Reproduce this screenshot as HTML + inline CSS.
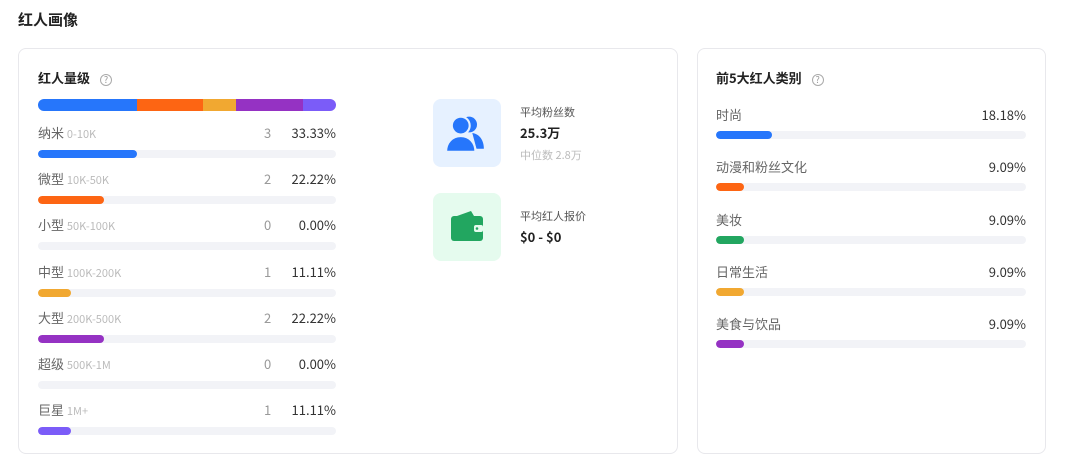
<!DOCTYPE html><html><head><meta charset="utf-8"><style>
*{margin:0;padding:0;box-sizing:border-box}
body{width:1080px;height:474px;background:#fff;font-family:"Noto Sans CJK SC","Liberation Sans",sans-serif;position:relative;overflow:hidden;color:#333}
.a{position:absolute;white-space:nowrap;line-height:18px}
.card{position:absolute;border:1px solid #e8e8ec;border-radius:8px;background:#fff}
.t{font-size:13px;font-weight:bold;color:#222}
.q{display:inline-block;width:12px;height:12px;border:1px solid #aaa;border-radius:50%;font-size:9px;line-height:10px;text-align:center;color:#999;font-weight:normal;margin-left:10px;vertical-align:0px}
.lab{font-size:13px;color:#666}
.lab span{font-size:11px;color:#bbb}
.n{font-size:13px;color:#999}
.p{font-size:13px;color:#333}
.bar{position:absolute;height:8px;border-radius:4px;background:#f2f3f7;overflow:hidden}
.bar i{position:absolute;left:0;top:0;bottom:0;border-radius:4px}
</style></head><body>
<div class="a" style="left:18px;top:10px;font-size:15px;font-weight:bold;color:#222;line-height:20px">红人画像</div>
<div class="card" style="left:18px;top:48px;width:660px;height:406px"></div>
<div class="card" style="left:697px;top:48px;width:349px;height:406px"></div>
<div class="a t" style="left:38px;top:69px">红人量级<span class="q">?</span></div>
<div style="position:absolute;left:38px;top:99px;width:298px;height:12px;border-radius:6px;overflow:hidden;display:flex">
<div style="width:99px;background:#2676fb"></div><div style="width:66px;background:#fd6513"></div><div style="width:33px;background:#f1a831"></div><div style="width:67px;background:#9532c3"></div><div style="width:33px;background:#7b5cf8"></div></div>
<div id="rows"></div>
<div class="a" style="left:433px;top:99px;width:68px;height:68px;border-radius:8px;background:#e6f1ff"></div>
<svg class="a" style="left:445px;top:113px" width="42" height="42" viewBox="0 0 40 40"><circle cx="23" cy="11" r="7.5" fill="#2676fb"/><path d="M26 19c7 1 11 7 11 15h-7z" fill="#2676fb"/><circle cx="15" cy="12" r="8.5" fill="#2676fb" stroke="#e6f1ff" stroke-width="2"/><path d="M1 37c0-9 6-15 14-15s14 6 14 15z" fill="#2676fb" stroke="#e6f1ff" stroke-width="2"/></svg>
<div class="a" style="left:520px;top:103px;font-size:11px;color:#555">平均粉丝数</div>
<div class="a" style="left:520px;top:124px;font-size:13px;font-weight:bold;color:#222">25.3万</div>
<div class="a" style="left:520px;top:146px;font-size:11px;color:#bbb">中位数 2.8万</div>
<div class="a" style="left:433px;top:193px;width:68px;height:68px;border-radius:8px;background:#e5fbee"></div>
<svg class="a" style="left:447px;top:207px" width="40" height="40" viewBox="0 0 40 40"><path d="M10 9l14-5 3 5z" fill="#22a660"/><rect x="4" y="9" width="32" height="25" rx="3" fill="#22a660"/><rect x="27" y="18" width="9" height="7" rx="2" fill="#e5fbee"/><circle cx="30" cy="21.5" r="1.3" fill="#22a660"/></svg>
<div class="a" style="left:520px;top:207px;font-size:11px;color:#555">平均红人报价</div>
<div class="a" style="left:520px;top:228px;font-size:13px;font-weight:bold;color:#222">$0 - $0</div>
<div class="a t" style="left:716px;top:69px">前5大红人类别<span class="q">?</span></div>
<div id="cats"></div>
<script>
var r=[["纳米","0-10K",3,"33.33%",99,"#2676fb"],["微型","10K-50K",2,"22.22%",66,"#fd6513"],["小型","50K-100K",0,"0.00%",0,"#ccc"],["中型","100K-200K",1,"11.11%",33,"#f1a831"],["大型","200K-500K",2,"22.22%",66,"#9532c3"],["超级","500K-1M",0,"0.00%",0,"#ccc"],["巨星","1M+",1,"11.11%",33,"#7b5cf8"]],h="";
r.forEach(function(x,i){var y=124+i*46.2;h+='<div class="a lab" style="left:38px;top:'+y+'px">'+x[0]+' <span>'+x[1]+'</span></div><div class="a n" style="left:264px;top:'+y+'px">'+x[2]+'</div><div class="a p" style="right:744px;top:'+y+'px">'+x[3]+'</div><div class="bar" style="left:38px;top:'+(y+26)+'px;width:298px"><i style="width:'+x[4]+'px;background:'+x[5]+'"></i></div>'});
document.getElementById('rows').innerHTML=h;
var c=[["时尚","18.18%",56,"#2676fb"],["动漫和粉丝文化","9.09%",28,"#fd6513"],["美妆","9.09%",28,"#22a660"],["日常生活","9.09%",28,"#f1a831"],["美食与饮品","9.09%",28,"#9532c3"]];h="";
c.forEach(function(x,i){var y=106+i*52.3;h+='<div class="a lab" style="left:716px;top:'+y+'px">'+x[0]+'</div><div class="a p" style="right:54px;top:'+y+'px">'+x[1]+'</div><div class="bar" style="left:716px;top:'+(y+25)+'px;width:310px"><i style="width:'+x[2]+'px;background:'+x[3]+'"></i></div>'});
document.getElementById('cats').innerHTML=h;
</script>
</body></html>
